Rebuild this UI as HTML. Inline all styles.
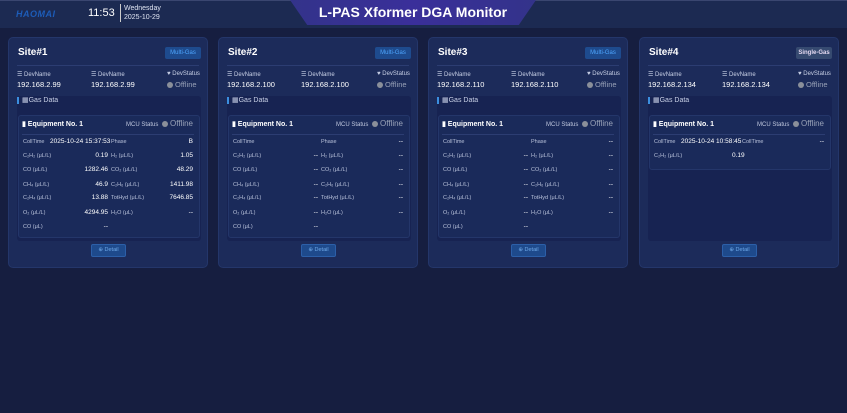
<!DOCTYPE html>
<html><head><meta charset="utf-8"><style>
*{margin:0;padding:0;box-sizing:border-box}
body{width:847px;height:413px;background:#161e40;font-family:"Liberation Sans",sans-serif;position:relative;overflow:hidden;color:#e6ebf7}
.hdr{position:absolute;left:0;top:0;width:847px;height:28px;background:#1c2a52;border-top:1px solid #3a4670}
.banner{position:absolute;left:290px;top:0;width:246px;height:25px;background:linear-gradient(90deg,#33338a,#3a2f9a 50%,#33338a);clip-path:polygon(0 0,100% 0,93% 100%,7% 100%)}
.banner span{position:absolute;left:0;right:0;top:4px;text-align:center;font-weight:bold;font-size:14px;color:#fff}
.logo{position:absolute;left:16px;top:9px;font-size:9px;font-weight:bold;font-style:italic;color:#1d5cb8;letter-spacing:0.5px}
.time{position:absolute;left:88px;top:7px;font-size:11px;color:#fff}
.date{position:absolute;left:120px;top:4px;font-size:7px;color:#dfe4f2;line-height:9px;border-left:1px solid #ccc;padding-left:3px}
.card{position:absolute;top:37px;width:200px;height:231px;background:#1c2b5a;border-radius:5px;border:1px solid #24366a}
.card .t{position:absolute;left:9px;top:9px;font-size:10px;font-weight:bold;color:#fff}
.badge{position:absolute;left:156px;top:9px;width:36px;height:12px;background:#1e4b8e;color:#4ea6ff;font-size:6px;text-align:center;line-height:12px;border-radius:2px}
.badge.s{background:#364a70;color:#e4d8f0;font-weight:bold}
.sep{position:absolute;left:8px;right:8px;top:27px;height:1px;background:#2c3d72}
.l{position:absolute;font-size:6px;color:#c8d0e6}
.v{position:absolute;font-size:7.5px;color:#fff}
.gp{position:absolute;left:8px;width:184px;top:58px;height:145px;background:#172352;border-radius:3px}
.gl{position:absolute;left:8px;top:59px;font-size:7px;color:#c8d0e6;border-left:2px solid #3b8fe0;padding-left:3px;line-height:7px}
.eq{position:absolute;left:9px;top:77px;width:182px;height:123px;background:#1a2a5a;border:1px solid #24366a;border-radius:3px}
.eqt{position:absolute;left:13px;top:82px;font-size:7px;font-weight:bold;color:#fff}
.mcu{position:absolute;right:14px;top:81px;font-size:6px;color:#c0c8de}
.mcu b{font-weight:normal;font-size:8px;color:#9aa3b8}
.dot{display:inline-block;width:6px;height:6px;border-radius:50%;background:#8a8f9a;vertical-align:middle;margin:0 2px}
.eline{position:absolute;left:13px;right:13px;top:96px;height:1px;background:#2c3d72}
.r{position:absolute;font-size:5.5px;color:#b8c1da;left:14px}
.r2{position:absolute;font-size:5.5px;color:#b8c1da;left:102px;white-space:nowrap}
.n1{position:absolute;font-size:6.5px;color:#fff;right:99px;text-align:right}
.n2{position:absolute;font-size:6.5px;color:#fff;right:14px;text-align:right}
.btn{position:absolute;left:82px;top:206px;width:35px;height:13px;background:#1e4a8c;border:1px solid #2c5fa8;border-radius:2px;color:#6ea8e8;font-size:5.5px;text-align:center;line-height:11px}
</style></head><body>
<div class="hdr"></div>
<div class="logo">HAOMAI</div>
<div class="time">11:53</div>
<div class="date">Wednesday<br>2025-10-29</div>
<div class="banner"><span>L-PAS Xformer DGA Monitor</span></div>

<div class="card" style="left:8px">
<div class="t">Site#1</div><div class="badge">Multi-Gas</div><div class="sep"></div>
<div class="l" style="left:8px;top:33px">☰ DevName</div><div class="l" style="left:82px;top:33px">☰ DevName</div><div class="l" style="left:158px;top:33px">♥ DevStatus</div>
<div class="v" style="left:8px;top:42px">192.168.2.99</div><div class="v" style="left:82px;top:42px">192.168.2.99</div><div class="v" style="left:158px;top:42px;color:#9aa3b8"><span class="dot" style="margin-left:0"></span>Offline</div>
<div class="gp"></div><div class="gl">▦Gas Data</div>
<div class="eq"></div><div class="eqt">▮ Equipment No. 1</div><div class="mcu">MCU Status <span class="dot"></span><b>Offline</b></div><div class="eline"></div>
<div class="r" style="top:101px">CollTime</div><div class="v" style="left:41px;top:100px;font-size:6.5px">2025-10-24 15:37:53</div><div class="r2" style="top:101px">Phase</div><div class="n2" style="top:100px">B</div>
<div class="r" style="top:115px">C₂H₂ (μL/L)</div><div class="n1" style="top:114px">0.19</div><div class="r2" style="top:115px">H₂ (μL/L)</div><div class="n2" style="top:114px">1.05</div>
<div class="r" style="top:129px">CO (μL/L)</div><div class="n1" style="top:128px">1282.46</div><div class="r2" style="top:129px">CO₂ (μL/L)</div><div class="n2" style="top:128px">48.29</div>
<div class="r" style="top:144px">CH₄ (μL/L)</div><div class="n1" style="top:143px">46.9</div><div class="r2" style="top:144px">C₂H₆ (μL/L)</div><div class="n2" style="top:143px">1411.98</div>
<div class="r" style="top:157px">C₂H₄ (μL/L)</div><div class="n1" style="top:156px">13.88</div><div class="r2" style="top:157px">TotHyd (μL/L)</div><div class="n2" style="top:156px">7646.85</div>
<div class="r" style="top:172px">O₂ (μL/L)</div><div class="n1" style="top:171px">4294.95</div><div class="r2" style="top:172px">H₂O (μL)</div><div class="n2" style="top:171px">--</div>
<div class="r" style="top:186px">CO (μL)</div><div class="n1" style="top:185px">--</div>
<div class="btn">⊕ Detail</div>
</div>

<div class="card" style="left:218px">
<div class="t">Site#2</div><div class="badge">Multi-Gas</div><div class="sep"></div>
<div class="l" style="left:8px;top:33px">☰ DevName</div><div class="l" style="left:82px;top:33px">☰ DevName</div><div class="l" style="left:158px;top:33px">♥ DevStatus</div>
<div class="v" style="left:8px;top:42px">192.168.2.100</div><div class="v" style="left:82px;top:42px">192.168.2.100</div><div class="v" style="left:158px;top:42px;color:#9aa3b8"><span class="dot" style="margin-left:0"></span>Offline</div>
<div class="gp"></div><div class="gl">▦Gas Data</div>
<div class="eq"></div><div class="eqt">▮ Equipment No. 1</div><div class="mcu">MCU Status <span class="dot"></span><b>Offline</b></div><div class="eline"></div>
<div class="r" style="top:101px">CollTime</div><div class="r2" style="top:101px">Phase</div><div class="n2" style="top:100px">--</div>
<div class="r" style="top:115px">C₂H₂ (μL/L)</div><div class="n1" style="top:114px">--</div><div class="r2" style="top:115px">H₂ (μL/L)</div><div class="n2" style="top:114px">--</div>
<div class="r" style="top:129px">CO (μL/L)</div><div class="n1" style="top:128px">--</div><div class="r2" style="top:129px">CO₂ (μL/L)</div><div class="n2" style="top:128px">--</div>
<div class="r" style="top:144px">CH₄ (μL/L)</div><div class="n1" style="top:143px">--</div><div class="r2" style="top:144px">C₂H₆ (μL/L)</div><div class="n2" style="top:143px">--</div>
<div class="r" style="top:157px">C₂H₄ (μL/L)</div><div class="n1" style="top:156px">--</div><div class="r2" style="top:157px">TotHyd (μL/L)</div><div class="n2" style="top:156px">--</div>
<div class="r" style="top:172px">O₂ (μL/L)</div><div class="n1" style="top:171px">--</div><div class="r2" style="top:172px">H₂O (μL)</div><div class="n2" style="top:171px">--</div>
<div class="r" style="top:186px">CO (μL)</div><div class="n1" style="top:185px">--</div>
<div class="btn">⊕ Detail</div>
</div>

<div class="card" style="left:428px">
<div class="t">Site#3</div><div class="badge">Multi-Gas</div><div class="sep"></div>
<div class="l" style="left:8px;top:33px">☰ DevName</div><div class="l" style="left:82px;top:33px">☰ DevName</div><div class="l" style="left:158px;top:33px">♥ DevStatus</div>
<div class="v" style="left:8px;top:42px">192.168.2.110</div><div class="v" style="left:82px;top:42px">192.168.2.110</div><div class="v" style="left:158px;top:42px;color:#9aa3b8"><span class="dot" style="margin-left:0"></span>Offline</div>
<div class="gp"></div><div class="gl">▦Gas Data</div>
<div class="eq"></div><div class="eqt">▮ Equipment No. 1</div><div class="mcu">MCU Status <span class="dot"></span><b>Offline</b></div><div class="eline"></div>
<div class="r" style="top:101px">CollTime</div><div class="r2" style="top:101px">Phase</div><div class="n2" style="top:100px">--</div>
<div class="r" style="top:115px">C₂H₂ (μL/L)</div><div class="n1" style="top:114px">--</div><div class="r2" style="top:115px">H₂ (μL/L)</div><div class="n2" style="top:114px">--</div>
<div class="r" style="top:129px">CO (μL/L)</div><div class="n1" style="top:128px">--</div><div class="r2" style="top:129px">CO₂ (μL/L)</div><div class="n2" style="top:128px">--</div>
<div class="r" style="top:144px">CH₄ (μL/L)</div><div class="n1" style="top:143px">--</div><div class="r2" style="top:144px">C₂H₆ (μL/L)</div><div class="n2" style="top:143px">--</div>
<div class="r" style="top:157px">C₂H₄ (μL/L)</div><div class="n1" style="top:156px">--</div><div class="r2" style="top:157px">TotHyd (μL/L)</div><div class="n2" style="top:156px">--</div>
<div class="r" style="top:172px">O₂ (μL/L)</div><div class="n1" style="top:171px">--</div><div class="r2" style="top:172px">H₂O (μL)</div><div class="n2" style="top:171px">--</div>
<div class="r" style="top:186px">CO (μL)</div><div class="n1" style="top:185px">--</div>
<div class="btn">⊕ Detail</div>
</div>

<div class="card" style="left:639px">
<div class="t">Site#4</div><div class="badge s">Single-Gas</div><div class="sep"></div>
<div class="l" style="left:8px;top:33px">☰ DevName</div><div class="l" style="left:82px;top:33px">☰ DevName</div><div class="l" style="left:158px;top:33px">♥ DevStatus</div>
<div class="v" style="left:8px;top:42px">192.168.2.134</div><div class="v" style="left:82px;top:42px">192.168.2.134</div><div class="v" style="left:158px;top:42px;color:#9aa3b8"><span class="dot" style="margin-left:0"></span>Offline</div>
<div class="gp"></div><div class="gl">▦Gas Data</div>
<div class="eq" style="height:55px"></div><div class="eqt">▮ Equipment No. 1</div><div class="mcu">MCU Status <span class="dot"></span><b>Offline</b></div><div class="eline"></div>
<div class="r" style="top:101px">CollTime</div><div class="v" style="left:41px;top:100px;font-size:6.5px">2025-10-24 10:58:45</div><div class="r2" style="top:101px">CollTime</div><div class="n2" style="top:100px">--</div>
<div class="r" style="top:115px">C₂H₂ (μL/L)</div><div class="v" style="left:92px;top:114px;font-size:6.5px">0.19</div>
<div class="btn">⊕ Detail</div>
</div>
</body></html>
